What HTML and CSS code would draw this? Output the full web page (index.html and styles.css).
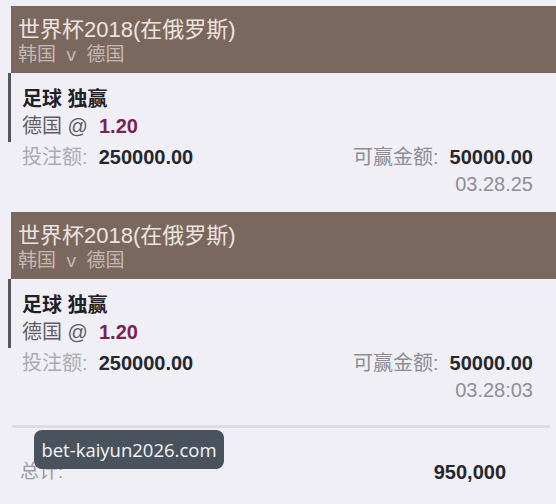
FILE: index.html
```html
<!DOCTYPE html>
<html lang="zh-CN">
<head>
    <meta charset="UTF-8">
    <meta name="viewport" content="width=device-width, initial-scale=1.0">
    <title>投注记录</title>
    <link rel="stylesheet" href="styles.css">
</head>
<body>
    <div class="slip">
        <div class="bet">
            <div class="bet-head">
                <div class="event">世界杯2018(在俄罗斯)</div>
                <div class="match">韩国 &nbsp;v&nbsp; 德国</div>
            </div>
            <div class="pick">
                <div class="market">足球 独赢</div>
                <div class="selection">德国 @ &nbsp;<span class="odds">1.20</span></div>
            </div>
            <div class="amounts">
                <span class="label">投注额: &nbsp;<b class="value">250000.00</b></span>
                <span class="label right">可赢金额: &nbsp;<b class="value">50000.00</b></span>
            </div>
            <div class="time">03.28.25</div>
        </div>

        <div class="bet">
            <div class="bet-head">
                <div class="event">世界杯2018(在俄罗斯)</div>
                <div class="match">韩国 &nbsp;v&nbsp; 德国</div>
            </div>
            <div class="pick">
                <div class="market">足球 独赢</div>
                <div class="selection">德国 @ &nbsp;<span class="odds">1.20</span></div>
            </div>
            <div class="amounts">
                <span class="label">投注额: &nbsp;<b class="value">250000.00</b></span>
                <span class="label right">可赢金额: &nbsp;<b class="value">50000.00</b></span>
            </div>
            <div class="time">03.28:03</div>
        </div>

        <div class="total">
            <span class="total-label">总计:</span>
            <b class="total-value">950,000</b>
        </div>
    </div>

    <div class="watermark">bet-kaiyun2026.com</div>
</body>
</html>
```

FILE: styles.css
```css
body {
    margin: 0;
    background: #f1eff6;
    font-family: "Liberation Sans", "Noto Sans CJK SC", sans-serif;
    color: #2a2c33;
    position: relative;
    height: 504px;
    overflow: hidden;
}
.slip {
    padding-top: 6px;
}
.bet {
    margin-left: 8px;
    padding-bottom: 15px;
}
.bet-head {
    margin-left: 3px;
    height: 67px;
    box-sizing: border-box;
    padding: 10px 0 0 7px;
    background: #7a685f;
}
.event {
    font-size: 22px;
    line-height: 28px;
    color: #ece3df;
}
.match {
    font-size: 19px;
    line-height: 22px;
    color: #c6b8b1;
}
.pick {
    border-left: 3px solid #56565a;
    padding: 13px 0 2px 11px;
}
.market,
.selection {
    font-size: 20px;
    line-height: 27px;
}
.market {
    font-weight: bold;
    color: #1f2127;
}
.selection {
    color: #5d5d63;
}
.odds {
    font-weight: bold;
    color: #7c2154;
}
.amounts {
    display: flex;
    justify-content: space-between;
    margin-top: 1px;
    padding: 0 23px 0 14px;
    font-size: 20px;
    line-height: 28px;
}
.label {
    color: #aaaab0;
}
.label.right {
    color: #8c8c92;
}
.value {
    font-size: 20px;
    color: #24272e;
}
.time {
    text-align: right;
    padding-right: 23px;
    font-size: 20px;
    line-height: 26px;
    color: #8e8e94;
}
.total {
    margin: 7px 6px 0 12px;
    border-top: 3px solid #dddce3;
    padding: 30px 44px 0 8px;
    display: flex;
    justify-content: space-between;
    line-height: 28px;
}
.total-label {
    font-size: 19px;
    color: #9a9aa0;
}
.total-value {
    font-size: 20px;
    color: #24262c;
}
.watermark {
    position: absolute;
    left: 34px;
    top: 430px;
    width: 190px;
    height: 39px;
    line-height: 39px;
    border-radius: 8px;
    background: #4a525e;
    color: #f4f5f7;
    font-family: "Open Sans", sans-serif;
    font-size: 18.5px;
    text-align: center;
}
```
